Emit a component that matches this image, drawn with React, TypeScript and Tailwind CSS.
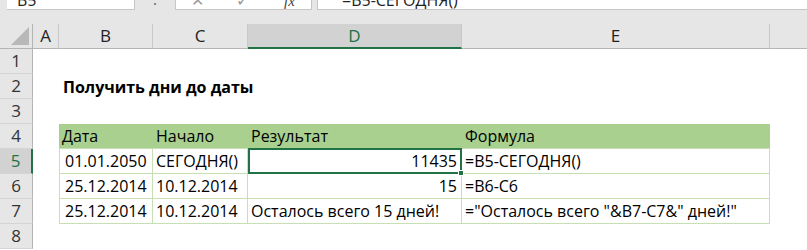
import React from 'react'

const font = "font-['Open_Sans',_'Liberation_Sans',_sans-serif]"

function ColHead({ w, label, active }: { w: string; label: string; active?: boolean }) {
  return (
    <div
      className={`${w} h-full shrink-0 flex items-center justify-center border-r border-[#c8c8c8] ${
        active ? 'bg-[#d2d2d2] text-[#217346] border-b-2 border-b-[#217346]' : 'border-b border-b-[#b4b4b4]'
      }`}
    >
      {label}
    </div>
  )
}

function RowHead({ n, active }: { n: number; active?: boolean }) {
  return (
    <div
      className={`w-[33px] h-full shrink-0 flex items-center justify-center border-b border-[#d4d4d4] text-[17px] ${
        active ? 'bg-[#d2d2d2] text-[#217346] border-r-2 border-r-[#217346]' : 'bg-[#e6e6e6] text-[#333] border-r border-r-[#b4b4b4]'
      }`}
    >
      {n}
    </div>
  )
}

export default function App() {
  return (
    <div className={`w-[807px] h-[250px] overflow-hidden bg-white text-[16px] text-black ${font}`}>
      {/* formula bar */}
      <div className="h-[24px] bg-[#e6e6e6] flex items-start text-[#222]">
        <div className="ml-[7px] w-[128px] h-[10px] bg-white border-r border-b border-[#c6c6c6] overflow-hidden">
          <div className="-mt-[10px] leading-[20px] pl-[10px]">B5</div>
        </div>
        <div className="w-[40px] h-[10px] flex justify-center overflow-hidden">
          <div className="-mt-[12px] leading-[20px] text-[#777]">⋮</div>
        </div>
        <div className="w-[137px] h-[10px] bg-white border-l border-r border-b border-[#c6c6c6] overflow-hidden flex items-start text-[#9a9a9a]">
          <div className="-mt-[10px] leading-[20px] pl-[15px] w-[60px] shrink-0">✕</div>
          <div className="-mt-[10px] leading-[20px] w-[48px] shrink-0">✓</div>
          <div className="-mt-[9px] leading-[20px] italic font-['Liberation_Serif',_serif] text-[#444] text-[15px]">fx</div>
        </div>
        <div className="ml-[5px] flex-1 h-[10px] bg-white border-l border-b border-[#c6c6c6] overflow-hidden">
          <div className="-mt-[10px] leading-[20px] pl-[24px]">=B5-СЕГОДНЯ()</div>
        </div>
      </div>

      {/* column headers */}
      <div className="h-[25px] flex bg-[#e6e6e6] text-[#222] text-[17px]">
        <div className="w-[33px] h-full shrink-0 relative border-r border-b border-[#b4b4b4]">
          <svg className="absolute right-[3px] bottom-[3px]" width="18" height="18" viewBox="0 0 18 18">
            <polygon points="18,0 18,18 0,18" fill="#b8b8b8" />
          </svg>
        </div>
        <ColHead w="w-[26px]" label="A" />
        <ColHead w="w-[94px]" label="B" />
        <ColHead w="w-[95px]" label="C" />
        <ColHead w="w-[214px]" label="D" active />
        <ColHead w="w-[308px]" label="E" />
        <div className="flex-1 h-full border-b border-[#b4b4b4]" />
      </div>

      {/* row 1 */}
      <div className="h-[25px] flex">
        <RowHead n={1} />
      </div>

      {/* row 2 */}
      <div className="h-[25px] flex">
        <RowHead n={2} />
        <div className="w-[26px] shrink-0" />
        <div className="flex items-center pl-[4px] font-bold whitespace-nowrap">Получить дни до даты</div>
      </div>

      {/* row 3 */}
      <div className="h-[25px] flex">
        <RowHead n={3} />
      </div>

      {/* row 4 - table header */}
      <div className="h-[25px] flex">
        <RowHead n={4} />
        <div className="w-[26px] shrink-0" />
        <div className="flex bg-[#a9d08e] border-b border-[#c6e0b4]">
          <div className="w-[94px] flex items-center pl-[3px]">Дата</div>
          <div className="w-[95px] flex items-center pl-[3px]">Начало</div>
          <div className="w-[214px] flex items-center pl-[3px]">Результат</div>
          <div className="w-[308px] flex items-center pl-[3px]">Формула</div>
        </div>
      </div>

      {/* row 5 */}
      <div className="h-[25px] flex">
        <RowHead n={5} active />
        <div className="w-[26px] shrink-0" />
        <div className="flex border-b border-[#c6e0b4] border-l border-r border-l-[#c6e0b4] border-r-[#c6e0b4]">
          <div className="w-[93px] flex items-center pl-[5px] border-r border-[#c6e0b4] whitespace-nowrap">01.01.2050</div>
          <div className="w-[95px] flex items-center pl-[3px] border-r border-[#c6e0b4] whitespace-nowrap">СЕГОДНЯ()</div>
          <div className="w-[214px] relative flex items-center justify-end pr-[3px] border-2 border-[#217346] -my-px">
            11435
            <div className="absolute -right-[4px] -bottom-[4px] w-[6px] h-[6px] bg-[#217346] border border-white" />
          </div>
          <div className="w-[307px] flex items-center pl-[3px] whitespace-nowrap">=B5-СЕГОДНЯ()</div>
        </div>
      </div>

      {/* row 6 */}
      <div className="h-[25px] flex">
        <RowHead n={6} />
        <div className="w-[26px] shrink-0" />
        <div className="flex border-b border-[#c6e0b4] border-l border-r border-l-[#c6e0b4] border-r-[#c6e0b4]">
          <div className="w-[93px] flex items-center pl-[5px] border-r border-[#c6e0b4] whitespace-nowrap">25.12.2014</div>
          <div className="w-[95px] flex items-center pl-[3px] border-r border-[#c6e0b4] whitespace-nowrap">10.12.2014</div>
          <div className="w-[214px] flex items-center justify-end pr-[4px] border-r border-[#c6e0b4]">15</div>
          <div className="w-[307px] flex items-center pl-[3px] whitespace-nowrap">=B6-C6</div>
        </div>
      </div>

      {/* row 7 */}
      <div className="h-[25px] flex">
        <RowHead n={7} />
        <div className="w-[26px] shrink-0" />
        <div className="flex border-b border-[#c6e0b4] border-l border-r border-l-[#c6e0b4] border-r-[#c6e0b4]">
          <div className="w-[93px] flex items-center pl-[5px] border-r border-[#c6e0b4] whitespace-nowrap">25.12.2014</div>
          <div className="w-[95px] flex items-center pl-[3px] border-r border-[#c6e0b4] whitespace-nowrap">10.12.2014</div>
          <div className="w-[214px] flex items-center pl-[3px] border-r border-[#c6e0b4] whitespace-nowrap">Осталось всего 15 дней!</div>
          <div className="w-[307px] flex items-center pl-[3px] whitespace-nowrap">="Осталось всего "&amp;B7-C7&amp;" дней!"</div>
        </div>
      </div>

      {/* row 8 */}
      <div className="h-[25px] flex">
        <RowHead n={8} />
      </div>
    </div>
  )
}
